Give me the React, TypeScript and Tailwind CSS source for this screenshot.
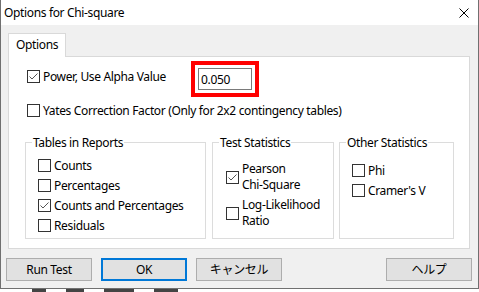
import React from 'react';

const Box = ({ checked }: { checked?: boolean }) => (
  <span className="w-[13px] h-[13px] shrink-0 border border-[#333333] bg-white flex items-center justify-center">
    {checked && (
      <svg width="11" height="11" viewBox="0 0 11 11">
        <path d="M1.5 5.5 L4 8 L9.5 2.5" fill="none" stroke="#555555" strokeWidth="1" />
      </svg>
    )}
  </span>
);

const Check = ({ label, checked }: { label: string; checked?: boolean }) => (
  <div className="flex items-center gap-[3px] h-[20px]">
    <Box checked={checked} />
    <span>{label}</span>
  </div>
);

const Btn = ({ children, primary }: { children: React.ReactNode; primary?: boolean }) => (
  <div
    className={
      primary
        ? 'w-[86px] h-[23px] bg-[#e1e1e1] border-2 border-[#0078d7] flex items-center justify-center'
        : 'w-[86px] h-[23px] bg-[#e1e1e1] border border-[#adadad] flex items-center justify-center'
    }
  >
    {children}
  </div>
);

const App = () => {
  return (
    <div className="w-[479px] h-[292px] bg-white overflow-hidden text-[12px] leading-[15px] tracking-[-0.35px] text-black font-['Noto_Sans','Noto_Sans_CJK_JP',sans-serif]">
      <div className="h-[289px] bg-[#f0f0f0] border-x border-b border-[#707070] flex flex-col">
        {/* title bar */}
        <div className="h-[25px] shrink-0 bg-white flex items-center justify-between pl-[3px] pr-[9px]">
          <span>Options for Chi-square</span>
          <svg width="10" height="10" viewBox="0 0 10 10">
            <path d="M0.5 0.5 L9.5 9.5 M9.5 0.5 L0.5 9.5" stroke="#000" strokeWidth="1" />
          </svg>
        </div>

        <div className="pt-[8px] pl-[7px]">
          <div className="relative z-10 -mb-px w-[58px] h-[24px] bg-white border border-b-0 border-[#d9d9d9] pl-[7px] pt-[3px]">
            Options
          </div>
          <div className="w-[462px] h-[193px] bg-white border border-[#d9d9d9] pl-[16px] flex flex-col">
            <div className="ml-[2px] mt-[11px] flex items-start">
              <div className="w-[171px] h-[17px] flex items-center gap-[3px]">
                <Box checked />
                <span>Power, Use Alpha Value</span>
              </div>
              <div className="w-[54px] h-[22px] border border-[#7a7a7a] pl-[2px] flex items-center outline-4 outline-offset-[3px] outline-[#ff0000]">
                0.050
              </div>
            </div>

            <div className="ml-[2px] mt-[12px] h-[17px] flex items-center gap-[3px]">
              <Box />
              <span>Yates Correction Factor (Only for 2x2 contingency tables)</span>
            </div>

            <div className="mt-[15px] flex">
              <fieldset className="w-[181px] h-[105px] border border-[#dcdcdc] pl-[6px]">
                <legend className="px-[1px] leading-[17px]">Tables in Reports</legend>
                <div className="ml-[6px] mt-[4px]">
                  <Check label="Counts" />
                  <Check label="Percentages" />
                  <Check label="Counts and Percentages" checked />
                  <Check label="Residuals" />
                </div>
              </fieldset>

              <fieldset className="ml-[6px] w-[122px] h-[105px] border border-[#dcdcdc] pl-[6px]">
                <legend className="px-[1px] leading-[17px]">Test Statistics</legend>
                <div className="ml-[7px] mt-[10px] flex flex-col gap-[4px] leading-[16px]">
                  <div className="flex items-center gap-[3px]">
                    <Box checked />
                    <span>
                      Pearson
                      <br />
                      Chi-Square
                    </span>
                  </div>
                  <div className="flex items-center gap-[3px]">
                    <Box />
                    <span>
                      Log-Likelihood
                      <br />
                      Ratio
                    </span>
                  </div>
                </div>
              </fieldset>

              <fieldset className="ml-[5px] w-[115px] h-[105px] border border-[#dcdcdc] pl-[6px]">
                <legend className="px-[1px] leading-[17px]">Other Statistics</legend>
                <div className="ml-[6px] mt-[9px]">
                  <Check label="Phi" />
                  <Check label="Cramer's V" />
                </div>
              </fieldset>
            </div>
          </div>
        </div>

        <div className="mt-[9px] pl-[5px] pr-[6px] flex gap-[9px]">
          <Btn>Run Test</Btn>
          <Btn primary>OK</Btn>
          <Btn>キャンセル</Btn>
          <div className="ml-auto">
            <Btn>ヘルプ</Btn>
          </div>
        </div>
      </div>
      <div className="h-[3px] flex gap-[20px] pl-[32px]">
        <span className="w-[14px] bg-[#444]" />
        <span className="w-[18px] bg-[#444]" />
        <span className="w-[30px] bg-[#444]" />
        <span className="w-[24px] bg-[#444]" />
      </div>
    </div>
  );
};

export default App;
